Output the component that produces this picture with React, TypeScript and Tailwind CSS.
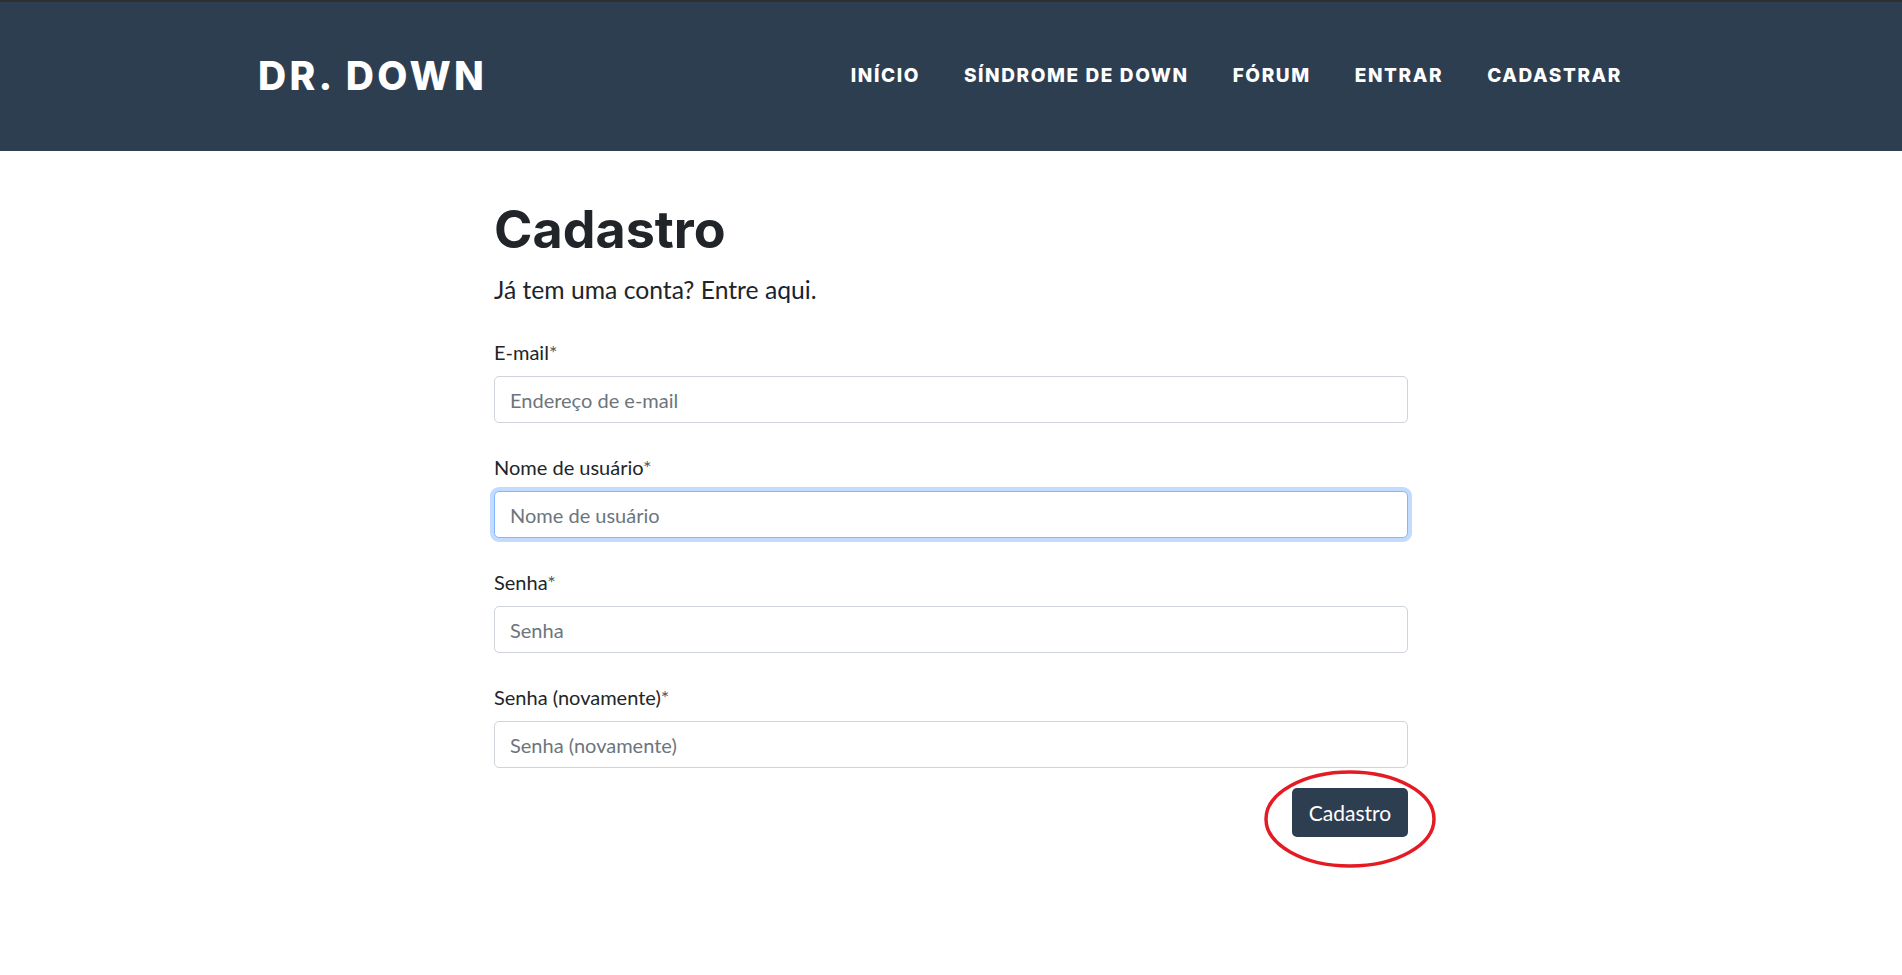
import { useState } from 'react'

const navLinks = ['Início', 'Síndrome de Down', 'Fórum', 'Entrar', 'Cadastrar']

const fields = [
    { id: 'email', label: 'E-mail', placeholder: 'Endereço de e-mail', type: 'email' },
    { id: 'username', label: 'Nome de usuário', placeholder: 'Nome de usuário', type: 'text' },
    { id: 'password1', label: 'Senha', placeholder: 'Senha', type: 'password' },
    { id: 'password2', label: 'Senha (novamente)', placeholder: 'Senha (novamente)', type: 'password' },
]

export default function App() {
    const [values, setValues] = useState<Record<string, string>>({})

    return (
        <div className="min-h-screen bg-white font-['Lato',sans-serif] text-[#212529]">
            {/* top navbar */}
            <header className="h-[151px] border-t-[2px] border-[#2f2f2f] bg-[#2e3e51]">
                <div className="mx-auto flex h-full w-[1386px] items-center justify-between">
                    <a href="#" className="font-['Inter',sans-serif] text-[39px] font-extrabold tracking-[3.3px] text-white">
                        DR. DOWN
                    </a>
                    <nav className="flex items-center">
                        {navLinks.map((link) => (
                            <a
                                key={link}
                                href="#"
                                className="px-[22px] font-['Inter',sans-serif] text-[19px] font-extrabold uppercase tracking-[1.6px] text-white"
                            >
                                {link}
                            </a>
                        ))}
                    </nav>
                </div>
            </header>

            <main className="mx-auto w-[914px] pt-[48px]">
                <h1 className="font-['Inter',sans-serif] text-[52px] font-bold leading-[1.2] text-[#212529]">Cadastro</h1>
                <p className="mt-[10px] text-[24.7px] leading-[1.5]">
                    Já tem uma conta? Entre <a href="#" className="text-[#15213a]">aqui</a>.
                </p>

                <form className="mt-[29px]" onSubmit={(e) => e.preventDefault()}>
                    {fields.map((f, i) => (
                        <div key={f.id} className={i === fields.length - 1 ? 'mb-[20px]' : 'mb-[29px]'}>
                            <label htmlFor={f.id} className="mb-[9px] block text-[20px] leading-[30px]">
                                {f.label}
                                <span className="text-[#5a5560]">*</span>
                            </label>
                            <input
                                id={f.id}
                                type={f.type}
                                placeholder={f.placeholder}
                                value={values[f.id] ?? ''}
                                onChange={(e) => setValues({ ...values, [f.id]: e.target.value })}
                                className={`block h-[47px] w-full rounded-[5px] border bg-white px-[15px] text-[20px] text-[#212529] outline-none placeholder:text-[#6c757d] ${
                                    f.id === 'username'
                                        ? 'border-[#86b7fe] shadow-[0_0_0_4px_rgba(13,110,253,0.25)]'
                                        : 'border-[#ced4da]'
                                }`}
                            />
                        </div>
                    ))}

                    <div className="flex justify-end">
                        <div className="relative">
                            <button
                                type="submit"
                                className="h-[49px] w-[116px] rounded-[5px] bg-[#2e3e51] text-[21px] text-white"
                            >
                                Cadastro
                            </button>
                            {/* red hand-drawn highlight */}
                            <svg
                                className="pointer-events-none absolute left-[-28px] top-[-19px]"
                                width="174"
                                height="100"
                                viewBox="0 0 174 100"
                            >
                                <ellipse cx="86" cy="50" rx="84" ry="47" fill="none" stroke="#e41b23" strokeWidth="3.5" />
                            </svg>
                        </div>
                    </div>
                </form>
            </main>
        </div>
    )
}
